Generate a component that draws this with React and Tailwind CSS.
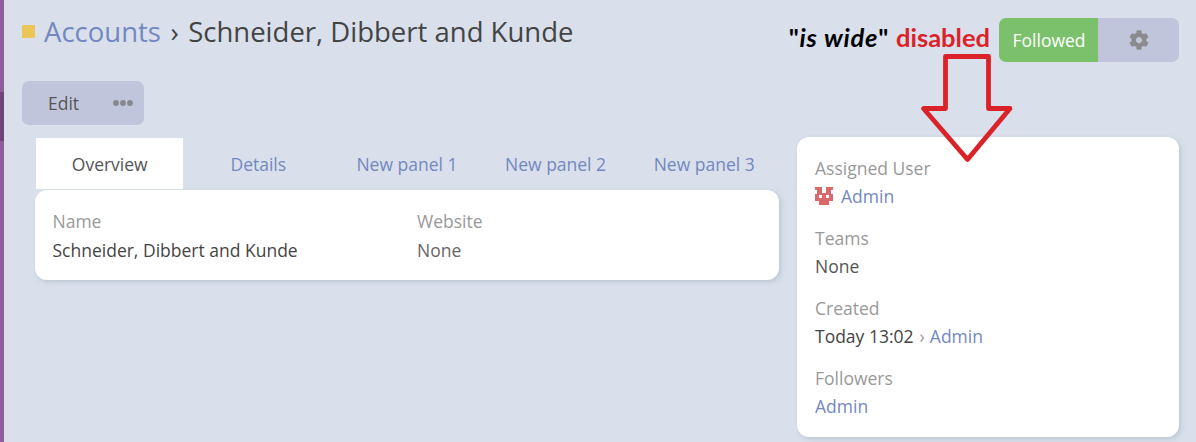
import { FaCog } from "react-icons/fa";

const link = "text-[#7388c0]";

function Field({ label, children }) {
  return (
    <div className="flex h-[70px] flex-col">
      <span className="h-7 leading-7 text-[#999999]">{label}</span>
      <span className="flex h-7 items-center leading-7 text-[#555555]">{children}</span>
    </div>
  );
}

function Avatar() {
  return (
    <svg className="mr-2 h-[18px] w-[18px]" viewBox="0 0 18 18" fill="#d96a6c" shapeRendering="crispEdges">
      <path d="M0 0H7V6H11V0H18V3H16V7H18V14H14V18H4V14H0V7H2V3H0Z" />
      <path fill="#fff" d="M4 8H7V11H4ZM11 8H14V11H11Z" />
    </svg>
  );
}

export default function App() {
  const tabs = ["Overview", "Details", "New panel 1", "New panel 2", "New panel 3"];
  return (
    <div className="relative flex h-[442px] w-[1196px] overflow-hidden bg-[#d9e0eb] font-['Open_Sans',sans-serif] text-[17.5px] whitespace-nowrap">
      <aside className="flex w-1 flex-col bg-[#8d5e99]">
        <div className="mt-[92px] h-[49px] bg-[#6e4779]" />
      </aside>
      <main className="flex flex-1 flex-col pr-[17px] pl-[18px]">
        <header className="flex h-[81px] items-start justify-between">
          <h1 className="flex h-[63px] items-center text-[27.5px] text-[#444]">
            <span className="mr-[9px] size-[13px] rounded-[1px] bg-[#ebc557]" />
            <span className={link}>Accounts</span>
            <span className="mx-[9.5px]">›</span>
            <span>Schneider, Dibbert and Kunde</span>
          </h1>
          <div className="flex pt-[18px]">
            <div className="mr-[9px] flex h-[39px] items-center font-[Lato,sans-serif] text-[25.5px] font-bold text-black">
              <span className="tracking-[0.75px]">"<i>is wide</i>"</span>
              <span className="ml-[7px] text-[#dc2229]">disabled</span>
            </div>
            <div className="flex h-11 overflow-hidden rounded-[7px]">
              <button className="w-[99px] bg-[#7bc16c] pl-px text-white">Followed</button>
              <button className="flex w-[81px] items-center justify-center bg-[#c0c5dc] pb-px text-[#8b8b8d]">
                <FaCog size={20} />
              </button>
            </div>
          </div>
        </header>
        <div className="flex h-11 w-[122px] items-center rounded-[7px] bg-[#c0c5dc] text-[#555]">
          <span className="w-[91px] pl-[26px]">Edit</span>
          <svg className="h-[6px] w-5" viewBox="0 0 20 6" fill="#87878f">
            <circle cx="3" cy="3" r="2.9" /><circle cx="10" cy="3" r="2.9" /><circle cx="17" cy="3" r="2.9" />
          </svg>
        </div>
        <div className="mt-3 flex items-start justify-between pl-[13px]">
          <section className="w-[744px]">
            <nav className="flex h-[53px] items-start pl-px">
              {tabs.map((tab, i) => (
                <button key={tab} className={i === 0
                  ? "mt-px mr-px h-[51px] w-[147.5px] bg-white pt-[2px] text-[#555]"
                  : "mt-px h-[51px] w-[148.7px] pt-[2px] pr-px text-[#7388c0]"}>{tab}</button>
              ))}
            </nav>
            <div className="flex h-[90px] rounded-xl bg-white px-[17.5px] pt-[17px] shadow-[2px_2px_5px_rgba(80,110,130,0.22)]">
              <div className="flex w-[364.5px] flex-col">
                <span className="h-[29px] leading-[29px] text-[#999]">Name</span>
                <span className="h-[29px] leading-[29px] text-[#444]">Schneider, Dibbert and Kunde</span>
              </div>
              <div className="flex flex-col">
                <span className="h-[29px] leading-[29px] text-[#999]">Website</span>
                <span className="h-[29px] leading-[29px] text-[#666]">None</span>
              </div>
            </div>
          </section>
          <section className="h-[300px] w-[382px] rounded-xl bg-white px-[18px] pt-[17px] shadow-[2px_2px_5px_rgba(80,110,130,0.22)]">
            <Field label="Assigned User"><Avatar /><span className={link}>Admin</span></Field>
            <Field label="Teams">None</Field>
            <Field label="Created">
              <span className="text-[#444]">Today 13:02</span>
              <span className="mr-[5px] ml-[6px] text-[#999]">›</span>
              <span className={link}>Admin</span>
            </Field>
            <Field label="Followers"><span className={link}>Admin</span></Field>
          </section>
        </div>
      </main>
      <svg className="absolute top-[52px] left-[918px]" width="98" height="112" viewBox="0 0 98 112" fill="none" stroke="#dc2229" strokeWidth="4.8" strokeLinejoin="round">
        <path d="M27.5 4.5H70.5V56.5H92L49.5 107.5L5.5 56.5H27.5Z" />
      </svg>
    </div>
  );
}
